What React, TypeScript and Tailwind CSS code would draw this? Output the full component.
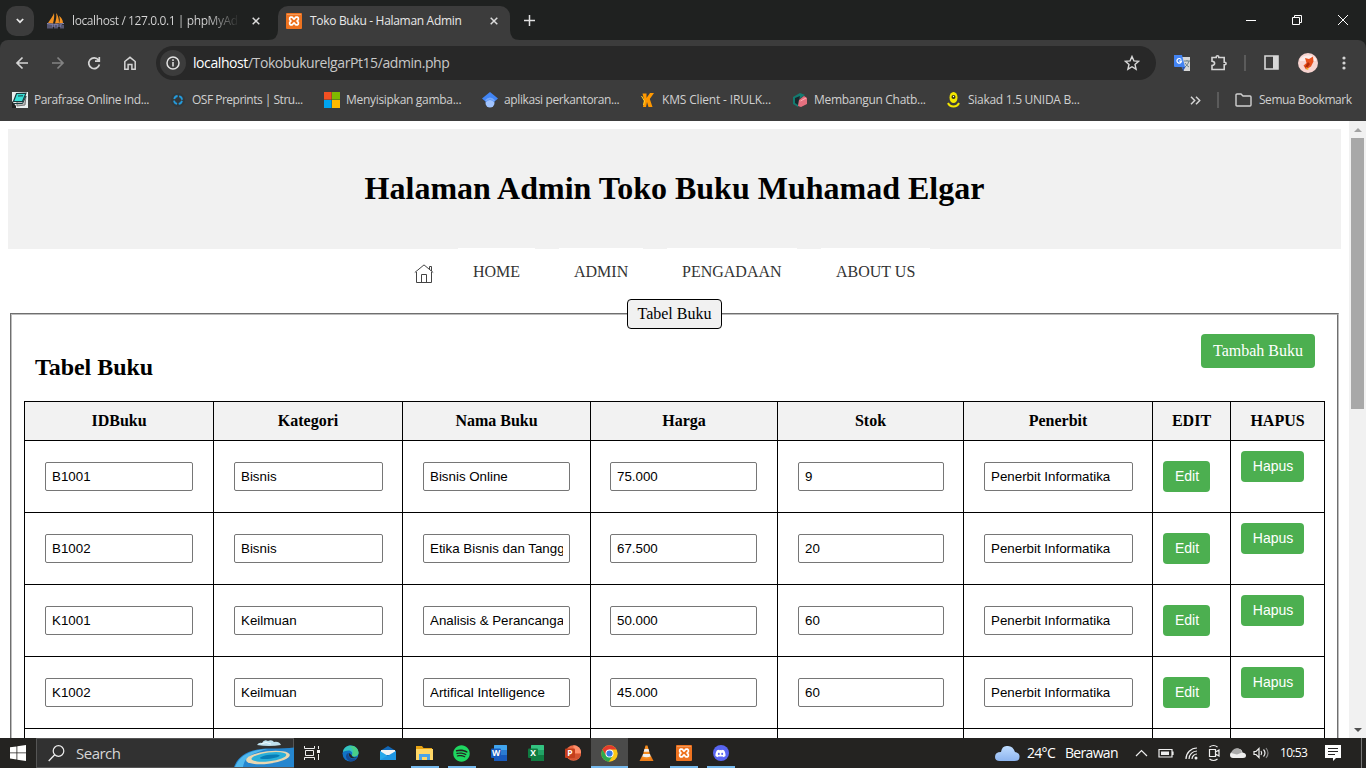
import React from "react";
import { FaDiscord, FaSpotify } from "react-icons/fa";

const ui = "font-['Open_Sans','Noto_Sans',sans-serif]";

type IconProps = { className?: string };

const Sailboat = ({ className = "" }: IconProps) => (
  <svg className={className} width="17" height="16" viewBox="0 0 17 16">
    <path d="M7 0C6 3 3 7 1 10l5 .5C7 7 7.500 3 7 0ZM9 0c1 3 0 7-1 10.500l4-.5C12 6 11 2 9 0ZM12 3c1 2 1 5 0 7.500l4-.5C16 7 14 4 12 3Z" fill="#f29324" />
    <path d="M0 10.500c5 1 11 1 17 0M1 11v4.500M3 11v4.500M5 11v4.500M5 13h3M8 11v4.500M10 11v4.500M10 13h4M14 11v4.500M16 12v3.500" stroke="#8c8cc0" fill="none" />
  </svg>
);

const Xampp = ({ size = 16 }: { size?: number }) => (
  <svg width={size} height={size} viewBox="0 0 16 16">
    <rect width="16" height="16" rx="1" fill="#ee7320" />
    <path d="M1 1.500h14" stroke="#f7b27e" strokeWidth=".6" />
    <path d="M4.300 4.200 6.300 4.200 8 6.200 9.700 4.200 11.700 4.200 12.300 5V6.700L11 8l1.300 1.300V11l-.6.800H9.700L8 9.800 6.300 11.800H4.300L3.700 11V9.300L5 8 3.700 6.700V5Z" fill="none" stroke="#fff" strokeWidth="1.700" strokeLinejoin="round" />
  </svg>
);

const Close = ({ className = "" }: IconProps) => (
  <svg className={className} width="8" height="8" viewBox="0 0 8 8">
    <path d="m.7.700 6.600 6.600M7.300.700.700 7.300" stroke="#dcdcdc" strokeWidth="1.500" />
  </svg>
);

function TabStrip() {
  return (
    <div className="flex h-10 items-start bg-[#1f2120]">
      <div className="ml-[6px] mt-[6px] flex h-[30px] w-7 items-center justify-center rounded-[10px] bg-[#3c3c3c]">
        <svg width="8" height="6" viewBox="0 0 8 6"><path d="m.8 1 3.200 3.200L7.200 1" fill="none" stroke="#e8e8e8" strokeWidth="1.700" /></svg>
      </div>
      <div className="mt-[6px] flex h-[29px] w-[234px] items-center pl-[13px]">
        <Sailboat />
        <span className={`${ui} ml-[8px] w-[168px] overflow-hidden whitespace-nowrap bg-gradient-to-r from-[#d8d8d8] from-80% to-transparent bg-clip-text text-[12px] tracking-[-0.4px] text-transparent`}>
          localhost / 127.0.0.1 | phpMyAd
        </span>
        <Close className="ml-[12px]" />
      </div>
      <div className="flex h-10 items-end">
        <svg width="10" height="10" viewBox="0 0 10 10"><path d="M10 0v10H0Q10 10 10 0Z" fill="#3c3c3c" /></svg>
      </div>
      <div className="mt-[6px] flex h-[34px] w-[232px] items-center rounded-t-[10px] bg-[#3c3c3c] pb-[5px] pl-[8px]">
        <Xampp />
        <span className={`${ui} ml-[8px] w-[152px] whitespace-nowrap text-[12px] tracking-[-0.31px] text-[#e8e8e8]`}>Toko Buku - Halaman Admin</span>
        <Close className="ml-[28px]" />
      </div>
      <div className="flex h-10 items-end">
        <svg width="10" height="10" viewBox="0 0 10 10"><path d="M0 0v10h10Q0 10 0 0Z" fill="#3c3c3c" /></svg>
      </div>
      <svg className="ml-[4px] mt-[15px]" width="11" height="11" viewBox="0 0 11 11"><path d="M5.500 0v11M0 5.500h11" stroke="#e0e0e0" strokeWidth="1.500" /></svg>
      <div className="ml-auto flex h-10 items-center pr-[17px]">
        <svg width="103" height="12" viewBox="0 0 103 12" fill="none" stroke="#fff">
          <path d="M0 6.500h10M46.500 3.500h7v7h-7zM48.500 3.500v-2h7v7h-2M92 1l10 10M102 1 92 11" />
        </svg>
      </div>
    </div>
  );
}

function Toolbar() {
  return (
    <div className="flex h-[45px] items-center rounded-t-[8px] bg-[#3c3c3c]">
      <svg className="ml-[15px]" width="124" height="16" viewBox="0 0 124 16" fill="none" strokeWidth="1.700">
        <path d="M13 8H2M7.500 2.500 2 8l5.500 5.500" stroke="#d5d5d5" />
        <path d="M37 8h11M42.500 2.500 48 8l-5.500 5.500" stroke="#828282" />
        <path d="M83.500 5A5.400 5.400 0 1 0 84.400 9.500M84.300 2v4.200h-4.300" stroke="#d5d5d5" />
        <path d="M109.800 6.500 115 2.300l5.200 4.200v7.700h-3.300V9.500h-3.800v4.700h-3.300Z" stroke="#d5d5d5" strokeWidth="1.500" />
      </svg>
      <div className="ml-[17px] flex h-[34px] w-[1000px] items-center rounded-full bg-[#282828] pl-[4px]">
        <div className="flex h-[26px] w-[26px] items-center justify-center rounded-full bg-[#3c3c3c]">
          <svg width="14" height="14" viewBox="0 0 14 14"><circle cx="7" cy="7" r="6" fill="none" stroke="#e3e3e3" strokeWidth="1.500" /><path d="M7 6v4.500M7 3.300v1.600" stroke="#e3e3e3" strokeWidth="1.500" /></svg>
        </div>
        <span className={`${ui} ml-[7px] whitespace-nowrap text-[14px] tracking-[-0.42px] text-[#c9c9c9]`}><span className="text-white">localhost</span>/TokobukurelgarPt15/admin.php</span>
        <svg className="ml-auto mr-[16px]" width="16" height="16" viewBox="0 0 16 16"><path d="m8 1.500 1.900 4.400 4.700.4L11 9.500l1.100 4.700L8 11.700l-4.100 2.500L5 9.500 1.400 6.300l4.700-.4Z" fill="none" stroke="#d8d8d8" strokeWidth="1.400" /></svg>
      </div>
      <svg className="ml-[18px]" width="17" height="17" viewBox="0 0 17 17">
        <path d="M7 3h9v14h-6L7 12Z" fill="#d7d7d7" />
        <path d="M0 1h8l3 12H1q-1 0-1-1Z" fill="#4384f3" />
        <path d="m8 13h3.500L9 17Z" fill="#2757b5" />
        <path d="M7.200 5.600a2.300 2.300 0 1 0 .3 1.600H5.200" fill="none" stroke="#fff" strokeWidth="1.200" />
        <path d="M10 7h6M13 6v1M11 9q2 3 4 4M15 7q-1 4-4 6" stroke="#6b828b" fill="none" />
      </svg>
      <svg className="ml-[19px]" width="18" height="18" viewBox="0 0 18 18"><path d="M2 3.500h4.200V3a1.200 1.200 0 0 1 2.600 0v.5h5.400v4.700h.6a1.300 1.300 0 0 1 0 2.600h-.6v4.700H2v-4q2.600-.3 2.600-2.200T2 7.200Z" fill="none" stroke="#d4d4d4" strokeWidth="1.600" /></svg>
      <div className="ml-[16px] h-4 w-[2px] bg-[#5b5b5b]" />
      <svg className="ml-[18px]" width="15" height="15" viewBox="0 0 15 15"><path d="M1 1h13v13H1Z" fill="none" stroke="#d7d7d7" strokeWidth="1.600" /><path d="M9 1h5v13H9Z" fill="#d7d7d7" /></svg>
      <svg className="ml-[19px]" width="20" height="20" viewBox="0 0 20 20">
        <circle cx="10" cy="10" r="10" fill="#f8d4d0" />
        <path d="M2 5.500Q10-1 18 5.500V8H2Z" fill="#fdecea" />
        <path d="m7 5 4 1 4-2.500.5 5-2.500 5-5 3-2.500-4 3-2.500Z" fill="#e9501c" />
        <path d="m10 9 2 2-3 4-2-1Z" fill="#b02a0b" />
        <path d="M8 14l3 2-2 1Z" fill="#efb52f" />
      </svg>
      <svg className="ml-[24px]" width="4" height="14" viewBox="0 0 4 14" fill="#d4d4d4"><circle cx="2" cy="2" r="1.600" /><circle cx="2" cy="7" r="1.600" /><circle cx="2" cy="12" r="1.600" /></svg>
    </div>
  );
}

const bookmarkIcons = [
  <svg key="p" width="16" height="16" viewBox="0 0 16 16"><path d="M0 0h16v16H0Z" fill="#e9eeee" /><path d="M0 16V9l4 5v2Z" fill="#222" /><path d="m5 5 9-1-1 9-8 1Z" fill="#bbb" stroke="#777" /><path d="m4.500 1.500 9.500-.3-3.500 8.300H1.500Z" fill="#38dfd6" stroke="#173c40" strokeWidth="1.200" /><path d="m6 4 5-.2M2 11.500h8.500L14 4" stroke="#173c40" fill="none" /></svg>,
  <svg key="o" width="16" height="16" viewBox="0 0 16 16"><circle cx="8" cy="8" r="7" fill="#33383b" /><circle cx="8" cy="8" r="4" fill="none" stroke="#249bdc" strokeWidth="1.800" strokeDasharray="4.600 1.680" strokeDashoffset="-.8" /></svg>,
  <svg key="m" width="16" height="16" viewBox="0 0 16 16"><path d="M0 0h7.600v7.600H0Z" fill="#f25022" /><path d="M8 0h8v7.600H8Z" fill="#7fba00" /><path d="M0 8h7.600v8H0Z" fill="#00a4ef" /><path d="M8 8h8v8H8Z" fill="#ffb900" /></svg>,
  <svg key="s" width="16" height="16" viewBox="0 0 16 16"><circle cx="8" cy="11" r="4.500" fill="#a0c3ff" /><path d="M8 0 0 6.500 4 10q4-4 8 0l4-3.500Z" fill="#4285f4" /><path d="M3.700 9q4.300-5 8.600 0" stroke="#76a7fa" strokeWidth="2" fill="none" /></svg>,
  <svg key="k" width="16" height="16" viewBox="0 0 16 16"><path d="M2.500 1.500H6.500V6L10 1h4L9.800 7l2.700 8H8.500L7 10l-1 5H3l1-7Z" fill="#ff9800" /><path d="M1.500 4l3 5-1 4" stroke="#ffd42a" fill="none" /></svg>,
  <svg key="c" width="16" height="16" viewBox="0 0 16 16"><path d="M1 5 8 1l5 2-6 4-1 8-5-3Z" fill="#137b70" /><path d="m3 6 5-2-2 9-3-2Z" fill="#19272b" /><path d="m7 8 5-4 3 2v6l-6 3-3-1Z" fill="#e5707f" /><path d="m8.500 9 5.500-3" stroke="#ffadb3" /></svg>,
  <svg key="u" width="16" height="16" viewBox="0 0 16 16"><ellipse cx="7.500" cy="5.500" rx="4" ry="5.500" fill="#f4e700" /><circle cx="7.500" cy="5" r="2" fill="#353510" /><circle cx="7.500" cy="4.500" r=".7" fill="#fff" /><path d="M2 11q1.500 3.500 5.500 3.500t5.500-3.500" stroke="#f4e700" strokeWidth="2" fill="none" /></svg>,
];

const bookmarks = [
  { t: "Parafrase Online Ind...", c: "w-[158px]", s: "tracking-[-0.4px]" },
  { t: "OSF Preprints | Stru...", c: "w-[154px]", s: "tracking-[-0.5px]" },
  { t: "Menyisipkan gamba...", c: "w-[158px]", s: "tracking-[-0.3px]" },
  { t: "aplikasi perkantoran...", c: "w-[158px]", s: "tracking-[-0.38px]" },
  { t: "KMS Client - IRULK...", c: "w-[152px]", s: "tracking-[-0.17px]" },
  { t: "Membangun Chatb...", c: "w-[154px]", s: "tracking-[-0.3px]" },
  { t: "Siakad 1.5 UNIDA B...", c: "w-[158px]", s: "tracking-[-0.28px]" },
];

function BookmarksBar() {
  return (
    <div className="flex h-9 items-center bg-[#3c3c3c] pb-[6px] pl-3">
      {bookmarks.map((b, i) => (
        <div key={b.t} className={`flex shrink-0 items-center ${b.c}`}>
          {bookmarkIcons[i]}
          <span className={`${ui} ml-[6px] whitespace-nowrap text-[12px] leading-4 text-[#d0d0d0] ${b.s}`}>{b.t}</span>
        </div>
      ))}
      <svg className="ml-[86px]" width="11" height="9" viewBox="0 0 11 9"><path d="m1 .8 3.700 3.700L1 8.200M6 .8l3.700 3.700L6 8.200" fill="none" stroke="#d4d4d4" strokeWidth="1.500" /></svg>
      <div className="ml-[16px] h-4 w-[2px] bg-[#5b5b5b]" />
      <svg className="ml-[16px]" width="17" height="14" viewBox="0 0 17 14"><path d="M1 2q0-1 1-1h4l2 2h7q1 0 1 1v8q0 1-1 1H2q-1 0-1-1Z" fill="none" stroke="#d0d0d0" strokeWidth="1.400" /></svg>
      <span className={`${ui} ml-[7px] whitespace-nowrap text-[12px] leading-4 tracking-[-0.46px] text-[#d0d0d0]`}>Semua Bookmark</span>
    </div>
  );
}

const headers = ["IDBuku", "Kategori", "Nama Buku", "Harga", "Stok", "Penerbit", "EDIT", "HAPUS"];
const rows = [
  ["B1001", "Bisnis", "Bisnis Online", "75.000", "9", "Penerbit Informatika"],
  ["B1002", "Bisnis", "Etika Bisnis dan Tangg", "67.500", "20", "Penerbit Informatika"],
  ["K1001", "Keilmuan", "Analisis & Perancanga", "50.000", "60", "Penerbit Informatika"],
  ["K1002", "Keilmuan", "Artifical Intelligence", "45.000", "60", "Penerbit Informatika"],
];
const fieldWidths = ["w-[148px]", "w-[149px]", "w-[147px]", "w-[147px] -ml-px", "w-[146px]", "w-[149px]"];
const cols = "grid grid-cols-[189px_189px_188px_187px_186px_189px_78px_94px]";
const green = "rounded-[4px] bg-[#4caf50] text-white";

function BookTable() {
  return (
    <div className="ml-[12px] mt-[20px] w-[1301px] border-l border-t border-black">
      <div className={cols}>
        {headers.map((h) => (
          <div key={h} className="flex h-[39px] items-center justify-center border-b border-r border-black bg-[#f2f2f2] text-[16px] font-bold">{h}</div>
        ))}
      </div>
      {rows.map((r) => (
        <div key={r[0]} className={cols}>
          {r.map((v, i) => (
            <div key={i} className="h-[72px] border-b border-r border-black pl-[20px] pt-[21px]">
              <div className={`h-[29px] rounded-[2px] border border-[#767676] px-[6px] font-['Liberation_Sans',sans-serif] text-[13.333px] leading-[27px] ${fieldWidths[i]}`}>
                <div className="overflow-hidden whitespace-nowrap">{v}</div>
              </div>
            </div>
          ))}
          <div className="border-b border-r border-black pl-[10px] pt-[20px]">
            <button className={`${green} block h-[31px] w-[47px] pl-px font-['Liberation_Sans',sans-serif] text-[14px]`}>Edit</button>
          </div>
          <div className="border-b border-r border-black pl-[10px] pt-[10px]">
            <button className={`${green} block h-[31px] w-[63px] pl-px font-['Liberation_Sans',sans-serif] text-[14px]`}>Hapus</button>
          </div>
        </div>
      ))}
      <div className={cols}>
        {headers.map((h) => <div key={h} className="h-[72px] border-b border-r border-black" />)}
      </div>
    </div>
  );
}

function Page() {
  return (
    <div className="flex h-[617px] bg-white font-['Liberation_Serif',serif] text-black">
      <div className="h-full w-[1349px] overflow-hidden pt-2">
        <header className="ml-2 flex h-[120px] w-[1333px] items-center justify-center bg-[#f1f1f1] pb-[2px]">
          <h1 className="whitespace-nowrap text-[32px] font-bold">Halaman Admin Toko Buku Muhamad Elgar</h1>
        </header>
        <nav className="-mt-px flex h-[46px] gap-6 pl-[414px] text-[16px] text-[#333]">
          <svg className="mt-[16px]" width="20" height="20" viewBox="0 0 20 20" fill="none" stroke="#444"><path d="M.8 8.500 10 .9l9.200 7.600M2.500 8v10.500h15V8M7.500 18.500v-8h5v8M15.500 5V2.500h2v4.500" /></svg>
          <a className="w-[77px] whitespace-nowrap bg-white pl-[15px] pt-[12px]">HOME</a>
          <a className="w-[84px] whitespace-nowrap bg-white pl-[15px] pt-[12px]">ADMIN</a>
          <a className="w-[130px] whitespace-nowrap bg-white pl-[15px] pt-[12px]">PENGADAAN</a>
          <a className="w-[109px] whitespace-nowrap bg-white pl-[15px] pt-[12px]">ABOUT US</a>
        </nav>
        <section className="ml-[10px] mt-[19px] h-[700px] w-[1329px] border border-l-[#6f6f6f] border-r-[#bdbdbd] border-t-[#6f6f6f]">
          <div className="h-full border border-l-[#bdbdbd] border-r-[#6f6f6f] border-t-[#bdbdbd]">
            <div className="mx-auto -mt-[16px] flex h-[30px] w-[95px] items-center justify-center rounded-[4px] border border-black bg-[#f1f1f1] text-[16px]">Tabel Buku</div>
            <div className="mt-[5px] flex justify-between pl-[23px] pr-[22px]">
              <h2 className="mt-[19px] text-[24px] font-bold leading-7 tracking-[-0.05px]">Tabel Buku</h2>
              <button className={`${green} h-[34px] w-[114px] text-[16px]`}>Tambah Buku</button>
            </div>
            <BookTable />
          </div>
        </section>
      </div>
      <div className="flex w-[17px] flex-col items-center bg-[#f1f1f1]">
        <svg className="mt-[7px]" width="8" height="4" viewBox="0 0 8 4"><path d="M0 4 4 0l4 4Z" fill="#a3a3a3" /></svg>
        <div className="mt-[6px] h-[271px] w-[13px] bg-[#a8a8a8]" />
        <svg className="mb-[6px] mt-auto" width="8" height="4" viewBox="0 0 8 4"><path d="m0 0 4 4 4-4Z" fill="#505050" /></svg>
      </div>
    </div>
  );
}

const Office = ({ letter, light, mid, dark }: { letter: string; light: string; mid: string; dark: string }) => (
  <svg width="16" height="16" viewBox="0 0 16 16">
    <rect x="3" width="13" height="16" rx="1" fill={mid} />
    <path d="M3 1q0-1 1-1h11q1 0 1 1v4H3Z" fill={light} />
    <path d="M3 10h13v5q0 1-1 1H4q-1 0-1-1Z" fill={dark} />
    <rect y="3.500" width="10" height="9.500" rx="1" fill={dark} />
    <text x="5" y="11.300" textAnchor="middle" fontSize="8.500" fontWeight="700" fill="#fff" fontFamily="Open Sans">{letter}</text>
  </svg>
);

const Edge = () => (
  <svg width="17" height="17" viewBox="0 0 17 17"><circle cx="8.500" cy="8.500" r="8" fill="#1173c5" /><path d="M1 7C1.500 3 5 .5 8.500.5c5 0 8 3.500 8 7 0 3-2.500 4-4.500 4-1.500 0-2.500-.6-2-1.400C11 8 9.500 5.500 6.500 5.500 4 5.500 2 6.300 1 7Z" fill="#35c4bd" /><path d="M10 1q6 1 6.500 6.500c0 3-2.500 4-4.500 4-1.500 0-2.500-.6-2-1.400C12 6 11 3 7 1Z" fill="#55d66c" opacity=".65" /><path d="M7 8c-2 4 2 7.500 8 5.500C11 18 5 17 4 12c-.3-2 1-4 3-4Z" fill="#134a96" /><path d="M7.300 8c-1.300 3 1.200 5.700 5 5.300 1.200 0 2.300-.5 3-1-.5.100-5 .8-5.500-1.800Z" fill="#262522" /></svg>
);
const Mail = () => (
  <svg width="16" height="14" viewBox="0 0 16 14"><path d="M0 5 8 0l8 5v9H0Z" fill="#1267b6" /><path d="M1 4h14v5H1Z" fill="#f4f4f4" /><path d="m0 5 8 5 8-5v9H0Z" fill="#28a8ea" /><path d="m0 14 16-9v9Z" fill="#1b8ede" opacity=".65" /></svg>
);
const Folder = () => (
  <svg width="17" height="15" viewBox="0 0 17 15"><path d="M0 0h6l1.500 2H16v7H0Z" fill="#e8a313" /><path d="M0 3h17v11H0Z" fill="#ffd767" /><path d="M3 8h11v6h-3v-3H6v3H3Z" fill="#4aa3e8" /></svg>
);
const Chrome = () => (
  <svg width="17" height="17" viewBox="0 0 17 17"><circle cx="8.500" cy="8.500" r="8.200" fill="#fbc617" /><path d="M1.400 4.400A8.200 8.200 0 0 1 15.600 4.400H8.500L5 10.500Z" fill="#e33b2e" /><path d="M1.400 4.400a8.200 8.200 0 0 0 6.400 12.300L12 10.500H5Z" fill="#2da94f" /><circle cx="8.500" cy="8.500" r="4" fill="#fff" /><circle cx="8.500" cy="8.500" r="3.100" fill="#3478e5" /></svg>
);
const Cone = () => (
  <svg width="15" height="17" viewBox="0 0 15 17"><path d="M3 11h9l2.500 5H.5Z" fill="#ed7d18" /><path d="M6.500.5h2L12 13q-4.500 2-9 0Z" fill="#f58b1e" /><path d="M5.500 4h4l.8 2.700H4.700ZM4 9h7l.7 2.500q-4 1.500-8.400 0Z" fill="#eee" /></svg>
);

const apps: { icon: React.ReactNode; line?: boolean; active?: boolean }[] = [
  { icon: <Edge /> },
  { icon: <Mail /> },
  { icon: <Folder />, line: true },
  { icon: <FaSpotify size={17} color="#1ed760" />, line: true },
  { icon: <Office letter="W" light="#41a5ee" mid="#2b7cd3" dark="#185abd" /> },
  { icon: <Office letter="X" light="#33c481" mid="#21a366" dark="#107c41" /> },
  { icon: <svg width="16" height="16" viewBox="0 0 16 16"><circle cx="8.500" cy="8" r="7.700" fill="#ed6c47" /><path d="M8.500.3a7.700 7.700 0 0 1 7.700 7.700H8.500Z" fill="#ff8f6b" /><path d="M1 9h15a7.700 7.700 0 0 1-15 0Z" fill="#d35230" /><rect y="3.500" width="10" height="9.500" rx="1" fill="#c43e1c" /><text x="5" y="11.300" textAnchor="middle" fontSize="8.500" fontWeight="700" fill="#fff" fontFamily="Open Sans">P</text></svg> },
  { icon: <Chrome />, line: true, active: true },
  { icon: <Cone /> },
  { icon: <Xampp />, line: true },
  { icon: <span className="flex h-4 w-4 items-center justify-center rounded-full bg-[#5865f2]"><FaDiscord size={11} color="#fff" /></span>, line: true },
];

function Taskbar() {
  return (
    <div className="flex h-[30px] items-center bg-[#242321] text-white">
      <svg className="ml-[10px]" width="16" height="16" viewBox="0 0 16 16" fill="#fff"><path d="m0 2.300 6.500-.9v6.100H0ZM7.300 1.300 16 0v7.500H7.300ZM0 8.300h6.500v6.200L0 13.600ZM7.300 8.300H16V16l-8.700-1.300Z" /></svg>
      <div className="ml-[10px] flex h-[30px] w-[258px] items-center border border-[#555] bg-[#313131]">
        <svg className="ml-[11px]" width="17" height="17" viewBox="0 0 17 17"><circle cx="10.500" cy="6" r="5.300" fill="none" stroke="#eee" strokeWidth="1.200" /><path d="M6.700 9.800.7 16" stroke="#eee" strokeWidth="1.300" /></svg>
        <span className={`${ui} ml-[11px] text-[15px] leading-5 tracking-[-0.5px] text-[#d6d6d6]`}>Search</span>
        <svg className="-mr-px ml-auto" width="60" height="28" viewBox="0 0 60 28">
          <path d="M0 28C4 17 15 9 38 9.500q13 0 22-1V28Z" fill="#2586cf" />
          <path d="M1 28C5 18 14 11 34 10 18 14 10 19 9 28Z" fill="#50b8ed" />
          <g transform="rotate(-7 34 19)">
            <ellipse cx="34" cy="18.500" rx="22" ry="6.300" fill="#e9d7b0" />
            <ellipse cx="35" cy="18" rx="17.500" ry="4.300" fill="#2aafd9" />
            <ellipse cx="36" cy="18" rx="10" ry="2" fill="#087cb5" />
          </g>
          <path d="M23 6q2-3 5-2 2-4 6-2 4-2 6 1 5-1 7 3-12 2-24 0Z" fill="#bfe0ed" />
          <path d="M27 5q5-3 10 0" stroke="#eefaff" fill="none" />
        </svg>
      </div>
      <svg className="ml-[9px] mr-[12px]" width="17" height="16" viewBox="0 0 17 16" fill="none" stroke="#eee"><path d="M1.500 1v2.500h10V1M1.500 15v-2.500h10V15M2.500 5.500h8v5h-8zM15.500 1v3M15.500 9v6" /><path d="M14 5h3v3h-3z" fill="#eee" stroke="none" /></svg>
      {apps.map((a, i) => (
        <div key={i} className={`flex h-[30px] w-[37px] flex-col items-center ${a.active ? "bg-[#4b4b4a]" : ""}`}>
          <div className="flex h-7 items-center pt-[2px]">{a.icon}</div>
          {a.line && <div className={`h-[2px] bg-[#76b9ed] ${a.active ? "w-[37px]" : "w-[28px]"}`} />}
        </div>
      ))}
      <svg className="ml-[256px]" width="25" height="17" viewBox="0 0 25 17"><defs><linearGradient id="cloud" x2="0" y2="1"><stop stopColor="#bfdcff" /><stop offset="1" stopColor="#8db4ee" /></linearGradient></defs><path d="M5 16q-5 0-5-4 0-5 6-5Q7 0 13 1q5 0 7 6 5 1 4.500 5 0 4-5 4Z" fill="url(#cloud)" /></svg>
      <span className={`${ui} ml-[7px] w-[32px] whitespace-nowrap text-[14px] leading-5 tracking-[-0.7px]`}>24°C</span>
      <span className={`${ui} ml-[6px] w-[56px] whitespace-nowrap text-[14px] leading-5 tracking-[-0.68px]`}>Berawan</span>
      <svg className="ml-[14px]" width="136" height="18" viewBox="0 0 136 18" fill="none" stroke="#eee" strokeWidth="1.200">
        <path d="m1 12 5.500-5.500L12 12" />
        <path d="M24 5.500h13v7.500H24zM38 7.500v3.500" /><path d="M26 7.500h8v3.500h-8z" fill="#eee" stroke="none" />
        <path d="M51 15A11 11 0 0 1 62 4M54 15a8 8 0 0 1 8-8M57 15a5 5 0 0 1 5-5" /><circle cx="61" cy="14" r="1.500" fill="#eee" stroke="none" />
        <path d="M74.500 5.500h6v7h-6zM80.500 8l3.500-2v6l-3.500-2M74.500 3q4-3 8 0M74.500 15q4 3 8 0" />
        <path d="M98 14q-3 0-3-3t3-3q1-4 5-3.500 4 .5 4.500 4 3.500.5 3.500 3T108 14Z" fill="#eee" stroke="none" /><path d="M96 9q2-5 6-4.500 4 0 5 4l-5 2Z" fill="#aaa" stroke="none" />
        <path d="M119 7.500h2l3-3v9l-3-3h-2zM126 7q1.500 2 0 4M128.500 5.500q3 3.500 0 7" /><path d="M131 4q4 5 0 10" stroke="#888" />
      </svg>
      <span className={`${ui} ml-[9px] w-[27px] whitespace-nowrap text-[12px] leading-5 tracking-[-0.7px]`}>10:53</span>
      <svg className="ml-[18px]" width="16" height="16" viewBox="0 0 16 16"><path d="M0 0h16v13h-5l-3 3v-3H0Z" fill="#fff" /><path d="M3 3.500h10M3 6.500h10M3 9.500h7" stroke="#252525" /></svg>
      <div className="ml-[20px] h-[30px] w-px bg-[#777]" />
    </div>
  );
}

export default function App() {
  return (
    <div className="h-[768px] w-[1366px] overflow-hidden bg-[#1f2120]">
      <TabStrip />
      <Toolbar />
      <BookmarksBar />
      <Page />
      <Taskbar />
    </div>
  );
}
